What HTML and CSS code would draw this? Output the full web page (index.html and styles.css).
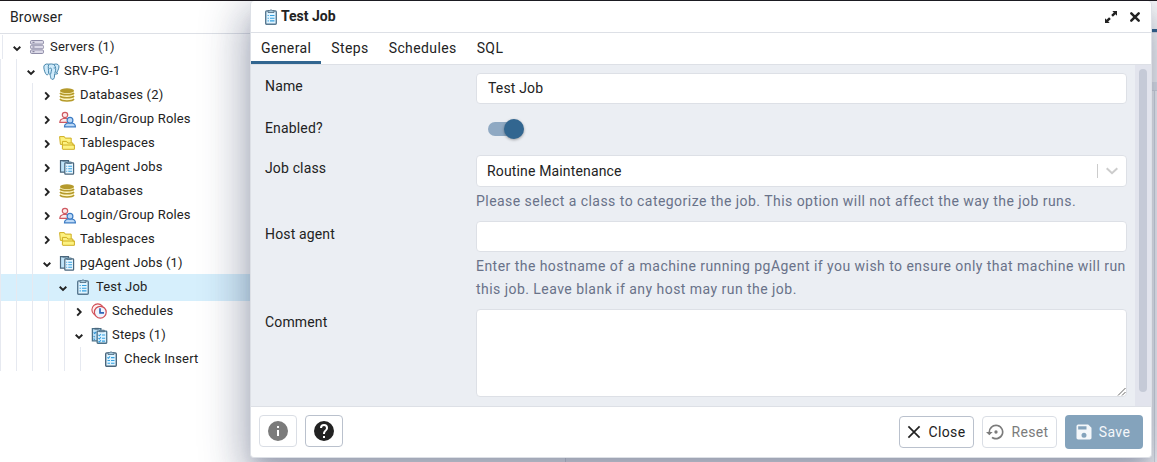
FILE: index.html
```html
<!DOCTYPE html>
<html lang="en">
<head>
<meta charset="utf-8">
<title>Test Job</title>
<link rel="stylesheet" href="styles.css">
</head>
<body>
<svg class="defs" width="0" height="0">
  <symbol id="down" viewBox="0 0 10 10"><path d="M1.700 3.700 5 6.900 8.300 3.700" fill="none" stroke="#222" stroke-width="1.900"/></symbol>
  <symbol id="right" viewBox="0 0 10 10"><path d="M3.200 1.400 6.700 5 3.200 8.600" fill="none" stroke="#222" stroke-width="1.900"/></symbol>
  <symbol id="servers" viewBox="0 0 16 16"><g fill="#dcdae8" stroke="#8f8da8" stroke-width="1"><rect x="1.500" y="1.500" width="13" height="3.600" rx="1.200"/><rect x="1.500" y="6.200" width="13" height="3.600" rx="1.200"/><rect x="1.500" y="10.900" width="13" height="3.600" rx="1.200"/></g><path d="M3.500 3.300h2M3.500 8h2M3.500 12.700h2" stroke="#77758f"/></symbol>
  <symbol id="pg" viewBox="0 0 16 16"><path d="M5.200 1.100C2.200.4.4 2 .8 4.600c.3 2.200 1.200 5.300 2.500 6.400.9.700 1.500-.4 2-1.100.3.500 1 .7 1.500.7.1 1.900.3 3 .7 3.900.7 1.500 3 1.100 3.200-.8l.3-3.400c1.300.3 2.400.1 3.100-.6l-1.400-.5c1.700-2.300 2.700-5.300 2.200-6.700C14.300.8 11.800.7 10.300 1.300 9 .8 6.800.8 5.200 1.100z" fill="#cfeafa" stroke="#3f80a6" stroke-width=".9"/><path d="M5.500 1.400C4.300 3.500 5.500 6.500 5.300 9.500M10.300 1.500c1.900 1.800 2.200 5 .8 8.200M6 5.300c1-.8 2-.5 2.100.7.1 1.500-.7 2.500-.9 4.300M10 4.700h1.200" fill="none" stroke="#3f80a6" stroke-width=".9"/></symbol>
  <symbol id="db" viewBox="0 0 16 16"><path d="M1 3.900v8.300c0 3.200 14 3.200 14 0V3.900z" fill="#fff8c8"/><path d="M1 6c1.500 2.300 12.500 2.300 14 0M1 9c1.500 2.300 12.500 2.300 14 0M1 12c1.500 2.500 12.500 2.500 14 0" fill="none" stroke="#b59a2c" stroke-width="1.500"/><ellipse cx="8" cy="3.700" rx="7" ry="2.500" fill="#b59a2c"/></symbol>
  <symbol id="roles" viewBox="0 0 17 16"><g fill="#fdeaea" stroke="#cf5a62" stroke-width="1.200"><path d="M.8 10.900C.8 8.200 2.300 7.500 4.300 7h3.400c2 .4 3 1.500 3 3.900z"/><circle cx="6" cy="3.500" r="2.700"/></g><g fill="#bcd9f7" stroke="#3c7cc4" stroke-width="1.200"><path d="M5.500 15.300c0-2.700 1.500-3.300 3.500-3.800h4c2 .4 3.400 1.200 3.400 3.800z"/><circle cx="11" cy="8.700" r="2.900"/></g></symbol>
  <symbol id="space" viewBox="0 0 16 16"><g fill="#fdf281" stroke="#cfae22" stroke-width="1"><path d="M.6 1.600h4.700l.9 1.500h6v6.300H1.400z"/><path d="M3.400 13.900V6.400h4.300l1 1.600h5.200v2h1.500v4.300H3.700z"/><path d="M4 10h11.400" fill="none"/></g></symbol>
  <symbol id="clip" viewBox="0 0 14 16"><rect x="1.700" y="1.900" width="10.600" height="13.300" rx="1" fill="#e0f4ff" stroke="#587991" stroke-width="1.400"/><path d="M4 3.500V1.600h1.500Q7 .1 8.500 1.600H10v1.900z" fill="#a9cadd" stroke="#4a667c" stroke-width=".8"/><path d="M6 6.500h4.500M6 9.200h4.500M6 11.900h4.500" stroke="#35a0e0" stroke-width="1.100"/><path d="M3.600 6.500h1.200M3.600 9.200h1.200M3.600 11.900h1.200" stroke="#35a0e0" stroke-width="1.100"/></symbol>
  <symbol id="jobs" viewBox="0 0 16 16"><path d="M1.500 1.700h8v11.500h-8z" fill="#bfe3f8" stroke="#4a667c" stroke-width="1.200"/><path d="M3.500 2.500V1h4v1.500z" fill="#4a667c"/><rect x="5.800" y="3.800" width="8.800" height="11.300" rx=".6" fill="#e7f6ff" stroke="#4a667c" stroke-width="1.200"/><path d="M7.900 4.500V2.900h4.400v1.600z" fill="#7197ae" stroke="#4a667c" stroke-width=".6"/><path d="M9.300 7.300h3.800M9.300 9.800h3.800M9.300 12.300h3.800M7.200 7.300h1M7.200 9.800h1M7.200 12.300h1" stroke="#35a0e0" stroke-width="1.100"/></symbol>
  <symbol id="steps" viewBox="0 0 16 16"><path d="M1.300 1.500h8v11.500h-8z" fill="#bfe3f8" stroke="#4a7088" stroke-width="1.200"/><path d="M3.300 2.400V.8h4v1.600z" fill="#4a667c"/><path d="m2.500 5 1 1L5 4.500M2.500 8.500l1 1M2.500 11l1 1" fill="none" stroke="#2d8fd0"/><rect x="5.800" y="3.800" width="9" height="11.500" rx=".6" fill="#dff3ff" stroke="#4a7088" stroke-width="1.200"/><path d="M7.900 4.500V2.900h4.600v1.600z" fill="#7197ae" stroke="#4a667c" stroke-width=".6"/><path d="m7 7.500.9.800L9.300 6.600M7 10.500l.9.800 1.400-1.700M7 13.200l.9.800 1.400-1.700M10.300 7.500h3M10.300 10.500h3M10.300 13.300h3" fill="none" stroke="#35a0e0" stroke-width="1"/></symbol>
  <symbol id="step" viewBox="0 0 14 16"><rect x="1.700" y="1.900" width="10.600" height="13.300" rx="1" fill="#e0f4ff" stroke="#4a667c" stroke-width="1.400"/><path d="M4 3.500V1.600h1.500Q7 .1 8.500 1.600H10v1.900z" fill="#a9cadd" stroke="#4a667c" stroke-width=".8"/><path d="m3.400 6.300 1 1L6 5.400M7 6.600h3.500M3.500 9.500H6M7 9.500h3.500M3.500 12.200H6M7 12.200h3.500" fill="none" stroke="#35a0e0" stroke-width="1.100"/></symbol>
  <symbol id="sched" viewBox="0 0 16 16"><circle cx="6.800" cy="6.800" r="5.900" fill="#fff1f1" stroke="#d14e56" stroke-width="1.100"/><circle cx="9.300" cy="9.200" r="5.900" fill="#eef5ff" stroke="#d14e56" stroke-width="1.200"/><path d="M9 5.300v4.500h4" fill="none" stroke="#2f66b8" stroke-width="1.700"/></symbol>
</svg>

<main class="app">
  <section class="browser">
    <header class="browser-title">Browser</header>
    <div class="tree">
      <div class="row level0"><svg class="arrow"><use href="#down"/></svg><svg class="icon"><use href="#servers"/></svg><span class="name">Servers (1)</span></div>
      <div class="row level1"><svg class="arrow"><use href="#down"/></svg><svg class="icon wide"><use href="#pg"/></svg><span class="name">SRV-PG-1</span></div>
      <div class="row level2"><svg class="arrow"><use href="#right"/></svg><svg class="icon"><use href="#db"/></svg><span class="name">Databases (2)</span></div>
      <div class="row level2"><svg class="arrow"><use href="#right"/></svg><svg class="icon wide"><use href="#roles"/></svg><span class="name">Login/Group Roles</span></div>
      <div class="row level2"><svg class="arrow"><use href="#right"/></svg><svg class="icon"><use href="#space"/></svg><span class="name">Tablespaces</span></div>
      <div class="row level2"><svg class="arrow"><use href="#right"/></svg><svg class="icon"><use href="#jobs"/></svg><span class="name">pgAgent Jobs</span></div>
      <div class="row level2"><svg class="arrow"><use href="#right"/></svg><svg class="icon"><use href="#db"/></svg><span class="name">Databases</span></div>
      <div class="row level2"><svg class="arrow"><use href="#right"/></svg><svg class="icon wide"><use href="#roles"/></svg><span class="name">Login/Group Roles</span></div>
      <div class="row level2"><svg class="arrow"><use href="#right"/></svg><svg class="icon"><use href="#space"/></svg><span class="name">Tablespaces</span></div>
      <div class="row level2"><svg class="arrow"><use href="#down"/></svg><svg class="icon"><use href="#jobs"/></svg><span class="name">pgAgent Jobs (1)</span></div>
      <div class="row level3 selected"><svg class="arrow"><use href="#down"/></svg><svg class="icon"><use href="#clip"/></svg><span class="name">Test Job</span></div>
      <div class="row level4"><svg class="arrow"><use href="#right"/></svg><svg class="icon"><use href="#sched"/></svg><span class="name">Schedules</span></div>
      <div class="row level4"><svg class="arrow"><use href="#down"/></svg><svg class="icon wide"><use href="#steps"/></svg><span class="name">Steps (1)</span></div>
      <div class="row level5"><svg class="icon"><use href="#step"/></svg><span class="name">Check Insert</span></div>
    </div>
  </section>
  <section class="workspace">
    <div class="work-tabs"></div>
    <div class="work-tools"></div>
    <div class="work-bar"></div>
    <div class="work-body"></div>
  </section>
</main>

<section class="dialog">
  <header class="dialog-head">
    <svg class="head-icon"><use href="#clip"/></svg>
    <h1 class="dialog-title">Test Job</h1>
    <svg class="expand" viewBox="0 0 14 14"><path d="M8.300 1H13v4.700l-1.500-1.500L8.900 6.800 7.200 5.100l2.600-2.600zM1 8.300l1.500 1.500 2.600-2.600 1.700 1.700-2.600 2.600L5.700 13H1z" fill="#222"/></svg>
    <svg class="close-x" viewBox="0 0 12 12"><path d="m2.300 2.300 7.400 7.400M9.700 2.300 2.300 9.700" stroke="#222" stroke-width="2.500" stroke-linecap="round"/></svg>
  </header>
  <nav class="tabs">
    <span class="tab active">General</span><span class="tab">Steps</span><span class="tab">Schedules</span><span class="tab">SQL</span>
  </nav>
  <div class="body">
    <div class="form">
      <label class="label">Name</label>
      <div class="field"><div class="input">Test Job</div></div>
      <label class="label label-switch">Enabled?</label>
      <div class="field switch-field"><div class="switch"><div class="thumb"></div></div></div>
      <label class="label">Job class</label>
      <div class="field">
        <div class="input select"><span class="value">Routine Maintenance</span><span class="bar"></span><svg class="caret" viewBox="0 0 14 10"><path d="m1.700 2.200 5.300 5 5.300-5" fill="none" stroke="#ccc" stroke-width="2"/></svg></div>
        <p class="help">Please select a class to categorize the job. This option will not affect the way the job runs.</p>
      </div>
      <label class="label">Host agent</label>
      <div class="field">
        <div class="input"></div>
        <p class="help">Enter the hostname of a machine running pgAgent if you wish to ensure only that machine will run<br>this job. Leave blank if any host may run the job.</p>
      </div>
      <label class="label">Comment</label>
      <div class="field"><div class="input area"><svg class="grip" viewBox="0 0 9 9"><path d="M1 8.500 8.500 1M5 8.500 8.500 5" stroke="#555" stroke-width=".9"/></svg></div></div>
    </div>
    <div class="scroll"><div class="scroll-thumb"></div></div>
  </div>
  <footer class="foot">
    <div class="btn square muted"><svg viewBox="0 0 24 24" width="24" height="24"><path d="M12 2a10 10 0 1 0 0 20 10 10 0 0 0 0-20zm1 15h-2v-6h2zm0-8h-2V7h2z" fill="#7b7b7b"/></svg></div>
    <div class="btn square"><svg viewBox="0 0 24 24" width="24" height="24"><path d="M12 2a10 10 0 1 0 0 20 10 10 0 0 0 0-20zm1 17h-2v-2h2zm2.070-7.750-.9.920C13.450 12.900 13 13.500 13 15h-2v-.5c0-1.100.45-2.100 1.170-2.830l1.240-1.260A2 2 0 0 0 14 9a2 2 0 0 0-4 0H8a4 4 0 0 1 8 0c0 .88-.36 1.680-.93 2.250z" fill="#222"/></svg></div>
    <span class="spacer"></span>
    <div class="btn close"><svg viewBox="0 0 20 20" width="20" height="20"><path d="m4.400 4.400 11.200 11.200M15.600 4.400 4.400 15.600" stroke="#222" stroke-width="1.700"/></svg>Close</div>
    <div class="btn muted reset"><svg viewBox="0 0 24 24" width="20" height="20"><path d="M14 12a2 2 0 1 0-4 0 2 2 0 0 0 4 0zM12 3a9 9 0 0 0-9 9H0l4 4 4-4H5a7 7 0 1 1 2.940 5.700l-1.420 1.440A9 9 0 1 0 12 3z" fill="#7b7b7b"/></svg>Reset</div>
    <div class="btn save"><svg viewBox="0 0 24 24" width="20" height="20"><path d="M17 3H5a2 2 0 0 0-2 2v14c0 1.100.9 2 2 2h14c1.100 0 2-.9 2-2V7zm-5 16a3 3 0 1 1 0-6 3 3 0 0 1 0 6zm3-10H5V5h10z" fill="#f4f7fa"/></svg>Save</div>
  </footer>
</section>
</body>
</html>
```
FILE: styles.css
```css
* { box-sizing: border-box; }
body {
  margin: 0;
  width: 1157px;
  height: 462px;
  overflow: hidden;
  font-family: Roboto, "Liberation Sans", sans-serif;
  font-size: 14px;
  color: #222;
  background: #fff;
}
.defs { position: absolute; }

.app { display: flex; height: 462px; border-top: 1px solid #1d191d; }
.browser { width: 565px; flex: none; background: #fff; }
.browser-title {
  height: 33px;
  padding-left: 10px;
  line-height: 32px;
  letter-spacing: 0.15px;
  border-bottom: 1px solid #dde0e6;
}
.workspace { flex: 1; display: flex; flex-direction: column; border-left: 1px solid #dde0e6; }
.work-tabs { height: 31px; border-bottom: 3px solid #326690; }
.work-tools { height: 50px; border-top: 1px solid #dde0e6; }
.work-bar { height: 9px; background: #ebeef3; border-bottom: 1px solid #dde0e6; }
.work-body { flex: 1; margin-right: 2px; border-right: 1px solid #dde0e6; background: #fafbfc; }

.tree { padding-top: 1px; font-size: 13px; letter-spacing: 0.17px; }
.row {
  --guide: linear-gradient(#e6e9f0, #e6e9f0);
  display: flex;
  align-items: center;
  height: 24px;
  background-repeat: no-repeat;
  background-size: 1px 100%;
}
.name { padding-bottom: 2px; }
.arrow { width: 10px; height: 10px; flex: none; margin: 2px 7px 0 0; }
.icon { width: 16px; height: 16px; flex: none; margin-right: 5px; }
.wide { width: 17px; height: 17px; margin-right: 4px; }
.level0 { padding-left: 12px; background-image: var(--guide); background-position: 2px 0; }
.level1 { padding-left: 26px; background-image: var(--guide), var(--guide); background-position: 0 0, 16px 0; }
.level2 { padding-left: 42px; background-image: var(--guide), var(--guide), var(--guide); background-position: 0 0, 16px 0, 32px 0; }
.level3 { padding-left: 58px; background-image: var(--guide), var(--guide), var(--guide), var(--guide); background-position: 0 0, 16px 0, 32px 0, 48px 0; }
.level4 { padding-left: 74px; background-image: var(--guide), var(--guide), var(--guide), var(--guide), var(--guide); background-position: 0 0, 16px 0, 32px 0, 48px 0, 64px 0; }
.level5 { padding-left: 103px; background-image: var(--guide), var(--guide), var(--guide), var(--guide), var(--guide), var(--guide); background-position: 0 0, 16px 0, 32px 0, 48px 0, 64px 0, 80px 0; }
.selected { height: 27px; margin: -1px 0 -2px; padding-bottom: 1px; background-color: #d6effc; }

/* Floating window above the workspace */
.dialog {
  position: absolute;
  left: 250px;
  top: 1px;
  width: 902px;
  height: 457px;
  display: flex;
  flex-direction: column;
  border: 1px solid #dde0e6;
  border-top: 0;
  border-radius: 4px;
  overflow: hidden;
  background: #fff;
  box-shadow: 0 11px 15px -7px rgba(34, 44, 85, 0.2), 0 24px 38px 3px rgba(34, 44, 85, 0.18), 0 9px 46px 8px rgba(34, 44, 85, 0.24);
}
.dialog-head {
  height: 32px;
  flex: none;
  display: flex;
  align-items: center;
  padding: 0 10px 0 13px;
  border-bottom: 1px solid #dde0e6;
}
.head-icon { width: 14px; height: 16px; margin-right: 3px; }
.dialog-title { flex: 1; margin: 0; padding-bottom: 2px; font-size: 14px; font-weight: 700; line-height: 28px; }
.expand { width: 14px; height: 14px; margin-right: 11px; }
.close-x { width: 12px; height: 12px; }
.tabs { height: 32px; flex: none; display: flex; border-bottom: 1px solid #dde0e6; }
.tab { padding: 0 10px; line-height: 31px; letter-spacing: 0.39px; height: 31px; border-bottom: 3px solid transparent; }
.active { border-color: #326690; }

.body { flex: 1; display: flex; background: #ebeef3; border-bottom: 1px solid #dde0e6; }
.form {
  flex: 1;
  min-width: 0;
  display: grid;
  grid-template-columns: 211px minmax(0, 1fr);
  row-gap: 8px;
  align-content: start;
  padding: 8px 8px 0 14px;
}
.label { padding-top: 3px; line-height: 20px; letter-spacing: 0.15px; }
.label-switch { padding-top: 6px; }
.input {
  height: 31px;
  padding: 0 11px;
  line-height: 29px;
  letter-spacing: 0.15px;
  background: #fff;
  border: 1px solid #dde0e6;
  border-radius: 4px;
}
.select { height: 32px; display: flex; align-items: center; padding: 0 7px 0 10px; }
.value { flex: 1; }
.bar { width: 1px; height: 14px; background: #ccc; margin-right: 7px; }
.caret { width: 14px; height: 10px; }
.area { height: 88px; display: flex; align-items: flex-end; justify-content: flex-end; padding: 0; }
.grip { width: 9px; height: 9px; }
.help { margin: 0; padding-top: 3px; line-height: 23px; letter-spacing: 0.46px; color: #697289; white-space: nowrap; }
.switch-field { height: 35px; padding: 10px 0 0 12px; }
.switch { width: 34px; height: 14px; display: flex; justify-content: flex-end; align-items: center; border-radius: 7px; background: #8fa9c3; }
.thumb { width: 20px; height: 20px; flex: none; margin-right: -2px; border-radius: 50%; background: #326690; box-shadow: 0 1px 3px rgba(0, 0, 0, 0.35); }
.scroll { width: 16px; flex: none; padding: 4px; background: #e2e4ed; }
.scroll-thumb { height: 323px; border-radius: 4px; background: #c5cad7; }

.foot { height: 50px; flex: none; display: flex; align-items: center; gap: 8px; padding: 0 8px; }
.btn {
  height: 32px;
  width: 75px;
  display: flex;
  align-items: center;
  justify-content: center;
  gap: 5px;
  padding-right: 4px;
  border: 1px solid #bac1cd;
  border-radius: 4px;
  letter-spacing: 0.35px;
}
.square { width: 38px; padding: 0; margin-bottom: 2px; }
.muted { border-color: #dadee5; color: #7b7b7b; }
.spacer { flex: 1; }
.save { width: 78px; height: 34px; border: 0; background: #84a3bc; color: #f4f7fa; }
```
